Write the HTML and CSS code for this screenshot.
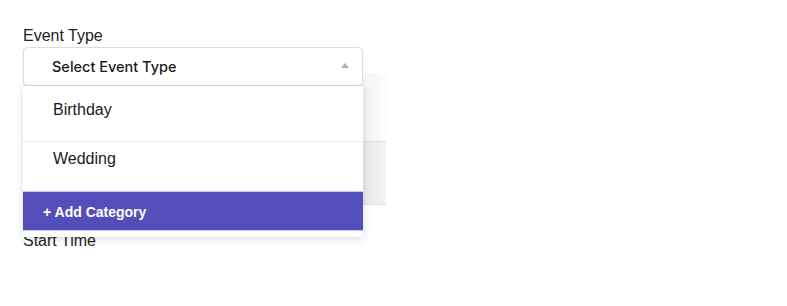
FILE: index.html
```html
<!DOCTYPE html>
<html lang="en">
<head>
  <meta charset="UTF-8">
  <meta name="viewport" content="width=device-width, initial-scale=1.0">
  <link rel="stylesheet" href="styles.css">
  <title>Event</title>
</head>
<body>
  <div class="form">
    <div class="field">
      <label class="label">Event Type</label>
      <div class="select-wrap">
        <div class="backdrop">
          <div class="backdrop-top"></div>
          <div class="backdrop-bottom"></div>
        </div>
        <div class="select">
          <span class="select-text">Select Event Type</span>
          <span class="arrow"></span>
        </div>
        <div class="menu">
          <div class="option first">Birthday</div>
          <div class="option second">Wedding</div>
          <div class="add-btn">+ Add Category</div>
        </div>
      </div>
    </div>
    <div class="field">
      <label class="label">Start Time</label>
    </div>
  </div>
</body>
</html>
```

FILE: styles.css
```css
body {
  margin: 0;
  background: #fff;
  font-family: "Liberation Sans", Arial, sans-serif;
  color: #1f1f1f;
}

.form {
  padding: 27px 23px 0;
  display: flex;
  flex-direction: column;
  gap: 146px;
}

.field {
  display: flex;
  flex-direction: column;
  gap: 2px;
}

.label {
  font-size: 16px;
  line-height: 18px;
  color: #222;
}

.select-wrap {
  position: relative;
  width: 340px;
}

.select {
  position: relative;
  z-index: 2;
  height: 37px;
  border: 1px solid #dcdcdc;
  border-radius: 4px;
  background: #fff;
  box-shadow: 0 1px 2px rgba(0, 0, 0, 0.06);
  display: flex;
  align-items: center;
  justify-content: space-between;
  padding: 0 13px 0 28px;
}

.select-text {
  font-family: Inter, "Liberation Sans", sans-serif;
  font-weight: 500;
  font-size: 14.5px;
  color: #1a1a1a;
}

.arrow {
  width: 0;
  height: 0;
  border-left: 4px solid transparent;
  border-right: 4px solid transparent;
  border-bottom: 5px solid #b0b0b0;
  margin-top: -2px;
}

.backdrop {
  position: absolute;
  z-index: 1;
  left: 0;
  top: 26px;
  width: 363px;
  height: 132px;
  display: flex;
  flex-direction: column;
}

.backdrop-top {
  height: 68px;
  background: linear-gradient(to right, #f3f3f3 93%, #f7f7f7 97%, #fcfcfc 100%);
  border-bottom: 1px solid #d6e0ea;
}

.backdrop-bottom {
  flex: 1;
  background: linear-gradient(to right, #e8e8e8 93%, #eeeeee 97%, #f5f5f5 100%);
  border-bottom: 1px solid #d6e0ea;
}

.menu {
  position: absolute;
  z-index: 3;
  left: 0;
  top: 39px;
  width: 340px;
  background: #fff;
  box-shadow: 0 2px 8px rgba(0, 0, 0, 0.14);
  padding-bottom: 6px;
}

.option {
  font-size: 16px;
  line-height: 20px;
  padding-left: 30px;
  color: #1a1a1a;
}

.option.first {
  height: 41px;
  padding-top: 14px;
  border-bottom: 1px solid #ececec;
}

.option.second {
  height: 42px;
  padding-top: 7px;
}

.add-btn {
  height: 38px;
  background: #534eb9;
  border-top: 1px solid #c9c6ec;
  border-bottom: 1px solid #c9c6ec;
  color: #fff;
  font-weight: bold;
  font-size: 14px;
  display: flex;
  align-items: center;
  padding-left: 20px;
  padding-top: 1px;
  box-sizing: border-box;
  height: 40px;
}
```
